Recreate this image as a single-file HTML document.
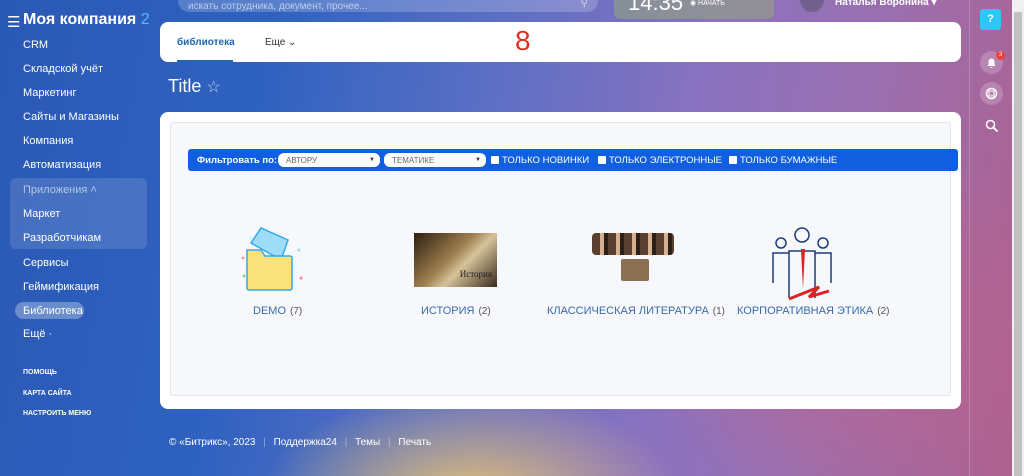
<!DOCTYPE html>
<html><head><meta charset="utf-8"><style>
*{margin:0;padding:0;box-sizing:border-box}
body{width:1024px;height:476px;overflow:hidden;font-family:"Liberation Sans",sans-serif;position:relative;
background:
radial-gradient(ellipse 300px 160px at 470px 500px,rgba(240,200,110,.9),rgba(240,200,110,0) 70%),
radial-gradient(ellipse 320px 260px at 860px 330px,rgba(190,100,140,.8),rgba(190,100,140,0) 70%),
linear-gradient(100deg,#2a58b5 0%,#2f62c0 25%,#5a6fc4 45%,#8a72c0 65%,#9a6fb0 80%,#b0608c 100%);}
.side a{position:absolute;left:23px;color:#fff;font-size:11px;text-decoration:none}
.small{font-size:7px!important;font-weight:bold}
.card{position:absolute;background:#fff;border-radius:8px}
.lbl{position:absolute;color:#3a6aa8;font-size:11px;text-align:center;white-space:nowrap}
.lbl span{color:#555;font-size:10px;margin-left:4px}
.sel{position:absolute;top:4px;background:#fff;border-radius:6px;height:14px;color:#666;font-size:8px;padding:3px 8px;width:102px}
.sel:after{content:"▼";position:absolute;right:5px;top:4px;font-size:6px;color:#333}
.cb{position:absolute;top:7px;width:8px;height:8px;background:#fff;border-radius:1px}
.ft{position:absolute;top:6px;font-size:9.5px;line-height:11px}
</style></head><body>
<div style="position:absolute;left:7px;top:13px;color:#fff;font-size:15px">☰</div>
<div style="position:absolute;left:23px;top:11px;color:#fff;font-size:16px;font-weight:bold">Моя компания <span style="color:#5fb5ff;font-weight:normal">2</span></div>
<div style="position:absolute;left:10px;top:178px;width:137px;height:71px;background:rgba(255,255,255,.13);border-radius:6px"></div>
<div style="position:absolute;left:15px;top:302px;width:69px;height:17px;background:rgba(255,255,255,.3);border-radius:9px"></div>
<div class="side">
<a style="top:39px">CRM</a><a style="top:63px">Складской учёт</a><a style="top:87px">Маркетинг</a><a style="top:111px">Сайты и Магазины</a><a style="top:135px">Компания</a><a style="top:159px">Автоматизация</a>
<a style="top:184px;color:rgba(255,255,255,.6)">Приложения ˄</a><a style="top:208px">Маркет</a><a style="top:232px">Разработчикам</a><a style="top:257px">Сервисы</a><a style="top:281px">Геймификация</a><a style="top:305px">Библиотека</a><a style="top:328px">Ещё ·</a>
<a class="small" style="top:369px">ПОМОЩЬ</a><a class="small" style="top:390px">КАРТА САЙТА</a><a class="small" style="top:410px">НАСТРОИТЬ МЕНЮ</a>
</div>
<div style="position:absolute;left:178px;top:-10px;width:420px;height:22px;background:rgba(255,255,255,.2);border-radius:11px;color:rgba(255,255,255,.6);font-size:10px;padding:11px 10px 0">искать сотрудника, документ, прочее...<span style="position:absolute;right:10px;top:8px">⚲</span></div>
<div style="position:absolute;left:614px;top:-10px;width:160px;height:29px;background:rgba(150,170,120,.55);border-radius:6px;color:#fff"><span style="position:absolute;left:14px;top:0;font-size:22px;font-weight:300">14:35</span><span style="position:absolute;left:76px;top:9px;font-size:7px">◉ НАЧАТЬ</span></div>
<div style="position:absolute;left:800px;top:-12px;width:24px;height:24px;border-radius:50%;background:rgba(80,80,100,.5)"></div>
<div style="position:absolute;left:835px;top:-3px;color:#fff;font-size:10px;font-weight:bold">Наталья Воронина ▾</div>
<div style="position:absolute;left:969px;top:0;width:1px;height:476px;background:rgba(255,255,255,.2)"></div>
<div style="position:absolute;left:1012px;top:0;width:12px;height:476px;background:#f0f0f0"><div style="position:absolute;left:2px;top:12px;width:8px;height:464px;background:#c1c1c1"></div></div>
<div style="position:absolute;left:980px;top:9px;width:21px;height:21px;background:#2fc6f6;border-radius:3px;color:#fff;font-size:11px;text-align:center;line-height:21px;font-weight:bold">?</div>
<div style="position:absolute;left:980px;top:51px;width:23px;height:23px;border-radius:50%;background:rgba(255,255,255,.2)"><svg width="23" height="23"><path d="M7.5 15 h8 l-1 -1.5 v-3 a3 3 0 0 0 -6 0 v3 z M10.5 16 h2 a1 1 0 0 1 -2 0" fill="#fff"/></svg></div>
<div style="position:absolute;left:996px;top:51px;width:9px;height:9px;border-radius:50%;background:#e9423f;color:#fff;font-size:6px;text-align:center;line-height:9px">3</div>
<div style="position:absolute;left:980px;top:82px;width:23px;height:23px;border-radius:50%;background:rgba(255,255,255,.2)"><svg width="23" height="23"><circle cx="11.5" cy="11.5" r="5" fill="none" stroke="#fff" stroke-width="1.5"/><rect x="9" y="9" width="5" height="5" fill="none" stroke="#fff"/></svg></div>
<svg style="position:absolute;left:985px;top:119px" width="14" height="14"><circle cx="5.5" cy="5.5" r="4" fill="none" stroke="#fff" stroke-width="1.5"/><path d="M8.5 8.5 L12.5 12.5" stroke="#fff" stroke-width="1.7"/></svg>
<div class="card" style="left:160px;top:22px;width:801px;height:40px">
<div style="position:absolute;left:17px;top:15px;color:#2067b0;font-size:10px;font-weight:bold">библиотека</div>
<div style="position:absolute;left:17px;top:38px;width:56px;height:2px;background:#2067b0"></div>
<div style="position:absolute;left:105px;top:15px;color:#333;font-size:10px">Еще ⌄</div>
<div style="position:absolute;left:355px;top:3px;color:#d32;font-size:28px">8</div>
</div>
<div style="position:absolute;left:168px;top:76px;color:#fff;font-size:18px">Title <span style="font-size:16px;color:rgba(255,255,255,.7)">☆</span></div>
<div class="card" style="left:160px;top:112px;width:801px;height:297px;background:#fff">
<div style="position:absolute;left:10px;top:10px;width:781px;height:274px;background:#f6f8fc;border:1px solid #e2e5ea;border-radius:3px">
<div style="position:absolute;left:17px;top:26px;width:770px;height:22px;background:#0f5fe0;border-radius:3px;color:#fff;white-space:nowrap">
<b class="ft" style="left:9px">Фильтровать по:</b><span class="sel" style="left:90px">АВТОРУ</span><span class="sel" style="left:196px">ТЕМАТИКЕ</span>
<span class="cb" style="left:303px"></span><span class="ft" style="left:314px">ТОЛЬКО НОВИНКИ</span>
<span class="cb" style="left:410px"></span><span class="ft" style="left:421px">ТОЛЬКО ЭЛЕКТРОННЫЕ</span>
<span class="cb" style="left:541px"></span><span class="ft" style="left:552px">ТОЛЬКО БУМАЖНЫЕ</span>
</div>
<svg style="position:absolute;left:60px;top:95px" width="80" height="80"><g><circle cx="12" cy="40" r="1.5" fill="#f99"/><circle cx="20" cy="20" r="1.5" fill="#bfe"/><circle cx="70" cy="60" r="1.5" fill="#f88"/><circle cx="13" cy="58" r="1.5" fill="#8d8"/><circle cx="68" cy="32" r="1.5" fill="#9df"/></g><path d="M20 25 L30 10 L57 22 L50 42 Z" fill="#9fdcf8" stroke="#35a8e8" stroke-width="1.5"/><path d="M16 32 h14 l4 6 h25 a2 2 0 0 1 2 2 v30 a2 2 0 0 1 -2 2 h-41 a2 2 0 0 1 -2 -2 z" fill="#fae27a" stroke="#35a8e8" stroke-width="1.5"/></svg>
<div style="position:absolute;left:243px;top:110px;width:83px;height:54px;background:linear-gradient(135deg,#2a1e12,#a08050 45%,#d6c29a 60%,#3a2a1a);"><span style="position:absolute;right:5px;bottom:8px;font-family:'Liberation Serif';font-size:9px;color:#222">История</span></div>
<div style="position:absolute;left:421px;top:110px;width:82px;height:22px;background:repeating-linear-gradient(90deg,#5a4030 0 8px,#d8b090 8px 12px,#2a2018 12px 16px);border-radius:4px"></div>
<div style="position:absolute;left:450px;top:136px;width:28px;height:22px;background:#8a7050;border-radius:2px"></div>
<svg style="position:absolute;left:598px;top:100px" width="66" height="78"><g fill="none" stroke="#1d3a7a" stroke-width="1.5"><circle cx="33" cy="12" r="7"/><path d="M20 75 V28 h26 V75"/><circle cx="12" cy="20" r="5"/><circle cx="54" cy="20" r="5"/><path d="M4 60 V30 h16 M46 30 h16 V60"/></g><path d="M32 26 l2 40 l2 -40z" fill="#d22"/><path d="M20 76 l30 -12 l-10 10 l20 -6" stroke="#d22" stroke-width="3" fill="none"/></svg>
<div class="lbl" style="left:82px;top:182px">DEMO<span>(7)</span></div>
<div class="lbl" style="left:250px;top:182px">ИСТОРИЯ<span>(2)</span></div>
<div class="lbl" style="left:376px;top:182px">КЛАССИЧЕСКАЯ ЛИТЕРАТУРА<span>(1)</span></div>
<div class="lbl" style="left:566px;top:182px">КОРПОРАТИВНАЯ ЭТИКА<span>(2)</span></div>
</div></div>
<div style="position:absolute;left:169px;top:437px;color:#fff;font-size:10px;white-space:nowrap">© «Битрикс», 2023 <span style="opacity:.4;margin:0 5px">|</span> Поддержка24 <span style="opacity:.4;margin:0 5px">|</span> Темы <span style="opacity:.4;margin:0 5px">|</span> Печать</div>
</body></html>
